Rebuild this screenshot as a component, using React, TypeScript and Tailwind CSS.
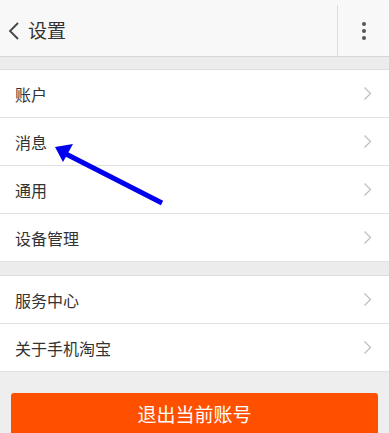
import React from "react";

const Chevron = () => (
  <svg width="9" height="15" viewBox="0 0 9 15" fill="none">
    <path d="M1.5 1.5 L7.5 7.5 L1.5 13.5" stroke="#bdbdbd" strokeWidth="1.2" />
  </svg>
);

const Row = ({ label }: { label: string }) => (
  <div className="h-[48px] border-b border-[#e1e1e1] flex items-center justify-between pl-[15px] pr-[17px] bg-white">
    <span className="text-[16px] text-[#333333]">{label}</span>
    <Chevron />
  </div>
);

export default function App() {
  return (
    <div
      className="relative w-[389px] h-[433px] overflow-hidden bg-[#eeeeee]"
      style={{ fontFamily: '"Noto Sans CJK SC", "Noto Sans", sans-serif' }}
    >
      <div className="h-[57px] pt-[5px] bg-[#f8f8f8] border-b border-[#d6d6d6] flex items-stretch">
        <div className="flex items-center flex-1 pl-[8px]">
          <svg width="12" height="20" viewBox="0 0 12 20" fill="none">
            <path d="M10 2 L2 10 L10 18" stroke="#444" strokeWidth="1.8" />
          </svg>
          <span className="ml-[8px] text-[19px] text-[#333333]">设置</span>
        </div>
        <div className="w-[52px] border-l border-[#dcdcdc] flex flex-col items-center justify-center gap-[3px]">
          <span className="w-[4px] h-[4px] rounded-full bg-[#555]" />
          <span className="w-[4px] h-[4px] rounded-full bg-[#555]" />
          <span className="w-[4px] h-[4px] rounded-full bg-[#555]" />
        </div>
      </div>
      <div className="h-[12px] bg-[#ececec]" />
      <div className="border-t border-[#dddddd]">
        <Row label="账户" />
        <Row label="消息" />
        <Row label="通用" />
        <Row label="设备管理" />
      </div>
      <div className="h-[13px] bg-[#ececec]" />
      <div className="border-t border-[#dddddd]">
        <Row label="服务中心" />
        <Row label="关于手机淘宝" />
      </div>
      <div className="pt-[21px] px-[11px]">
        <div className="h-[42px] rounded-[3px] bg-[#ff5000] flex items-center justify-center">
          <span className="text-[19px] text-white">退出当前账号</span>
        </div>
      </div>
      <svg className="absolute left-0 top-0" width="389" height="433" viewBox="0 0 389 433">
        <line x1="162" y1="203" x2="66" y2="154" stroke="#0000ee" strokeWidth="5" />
        <polygon points="55,147 73,144 63,162" fill="#0000ee" />
      </svg>
    </div>
  );
}
